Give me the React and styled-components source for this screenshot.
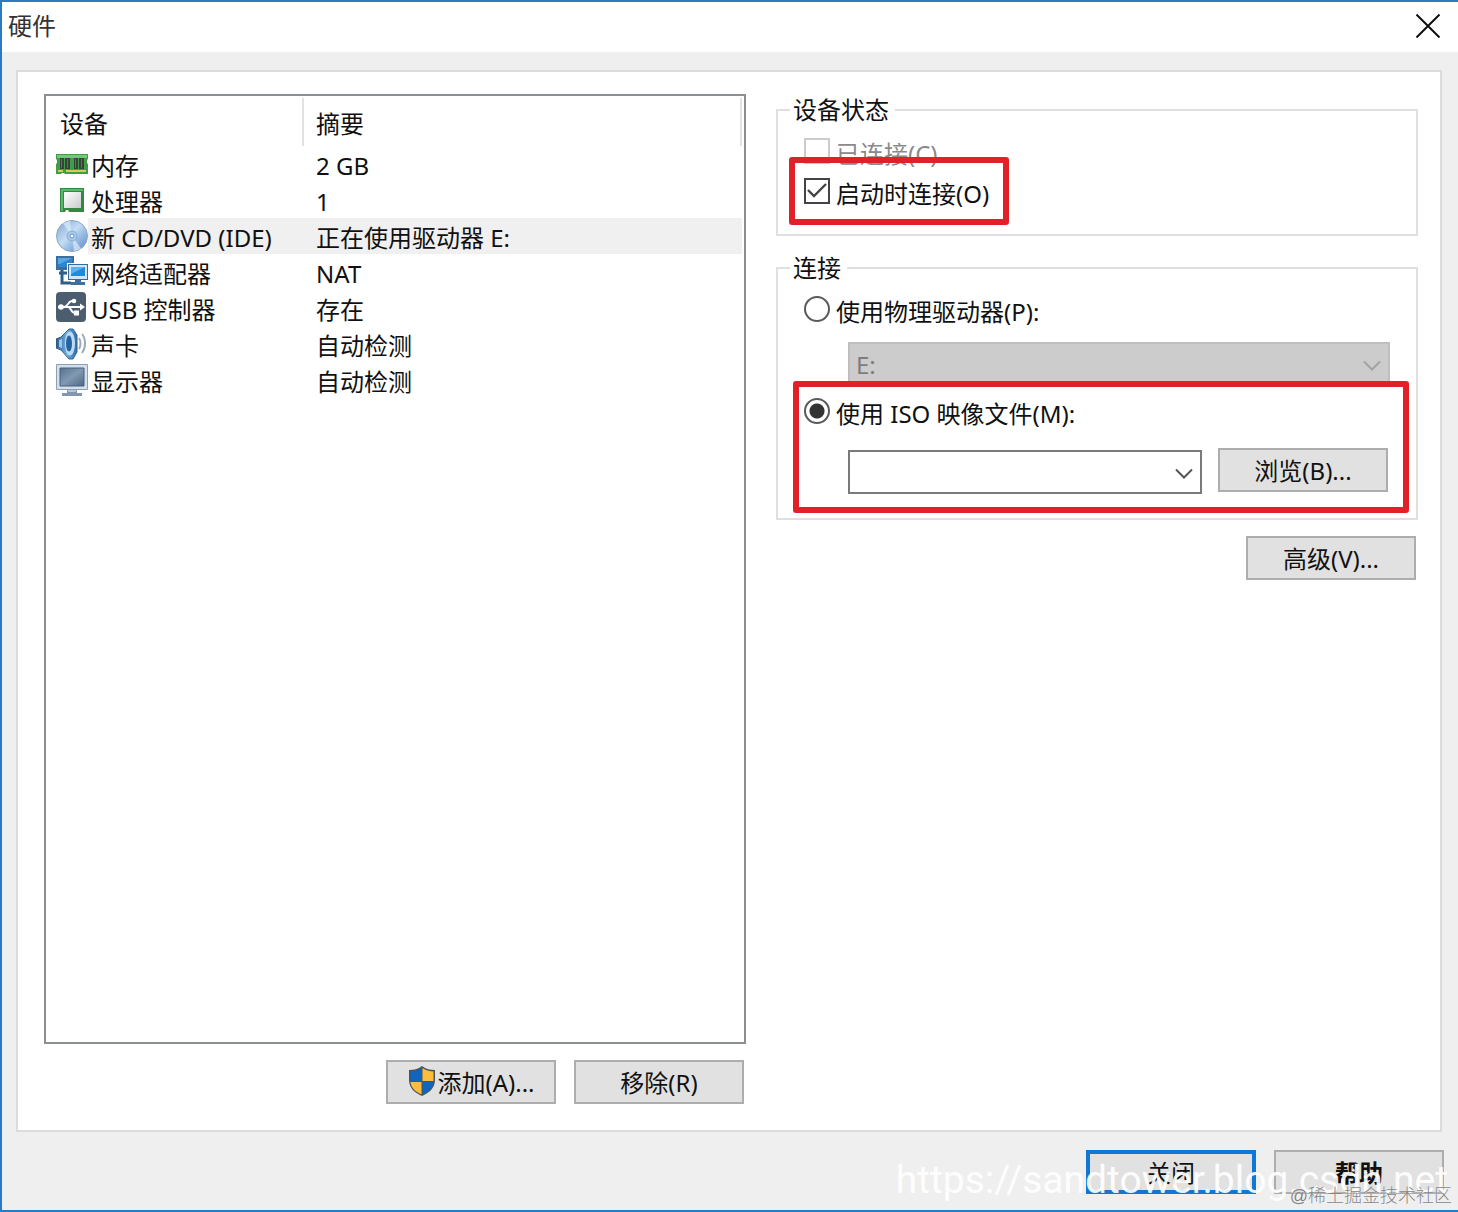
import React, { useState } from "react";
import styled, { createGlobalStyle, css } from "styled-components";

const GlobalStyle = createGlobalStyle`
  * {
    box-sizing: border-box;
  }

  body {
    margin: 0;
    background: #efefef;
    color: #111;
    font-family: "Noto Sans", "Noto Sans CJK SC", sans-serif;
    font-size: 24px;
    line-height: 32px;
  }

  button, select, input {
    font: inherit;
    color: inherit;
    margin: 0;
  }
`;

const Window = styled.div`
  position: relative;
  display: flex;
  flex-direction: column;
  min-height: 100vh;
  border: 2px solid #2b7bc3;
  border-right: 0;
  background: #efefef;
  overflow: hidden;
`;

const TitleBar = styled.header`
  display: flex;
  align-items: center;
  justify-content: space-between;
  height: 50px;
  padding: 0 18px 2px 6px;
  background: #fff;

  h1 {
    margin: 0;
    color: #333;
    font-size: 24px;
    font-weight: 400;
  }
`;

const CloseButton = styled.button`
  display: flex;
  padding: 0;
  border: 0;
  background: none;
`;

const Panel = styled.main`
  flex: 1;
  display: grid;
  grid-template-columns: 702fr 642fr;
  gap: 30px;
  margin: 18px 16px 0 14px;
  padding: 22px 22px 26px 26px;
  border: 2px solid #dcdcdc;
  background: #fff;
`;

const Column = styled.div`
  display: flex;
  flex-direction: column;
  gap: 16px;
  min-width: 0;
`;

const DeviceList = styled.div`
  flex: 1;
  padding-right: 2px;
  border: 2px solid #8c8f91;
`;

const Table = styled.table`
  width: 100%;
  border-collapse: collapse;
  table-layout: fixed;

  th, td {
    padding: 4px 0 0 12px;
    font-weight: 400;
    text-align: left;
    white-space: nowrap;
  }

  th {
    height: 50px;
    padding-top: 6px;
    padding-left: 14px;
    background: linear-gradient(#e2e2e2, #e2e2e2) right bottom / 2px 48px no-repeat;
  }

  th + th {
    padding-left: 12px;
  }

  td {
    height: 36px;
  }
`;

const DeviceCol = styled.col`
  width: 258px;
`;

const DeviceRow = styled.tr`
  td {
    background: ${(p) => (p.$selected ? "#f0f0f0" : "none")};
  }

  td:first-child {
    padding: 0 0 0 10px;
    ${(p) => p.$selected && "background: linear-gradient(to right, #fff 42px, #f0f0f0 42px);"}
  }
`;

const Device = styled.div`
  display: flex;
  align-items: center;
  gap: 3px;
  height: 36px;

  svg {
    flex: none;
  }

  span {
    padding-top: 4px;
  }
`;

const Buttons = styled.div`
  display: flex;
  justify-content: flex-end;
  gap: 18px;
  padding-right: 2px;
`;

const Button = styled.button`
  display: flex;
  align-items: center;
  justify-content: center;
  flex: none;
  width: 170px;
  height: 44px;
  padding: 2px 0 0;
  border: 2px solid #adadad;
  background: #e1e1e1;
  white-space: nowrap;

  svg {
    margin-bottom: 4px;
  }

  ${(p) =>
    p.$primary &&
    css`
      border: 4px solid #0f78d4;
    `}

  ${(p) =>
    p.$strong &&
    css`
      font-weight: 700;
    `}
`;

const Group = styled.fieldset`
  min-width: 0;
  margin: 0;
  padding: 5px 26px ${(p) => p.$bottom}px 26px;
  border: 2px solid #dfdfdf;

  legend {
    margin-left: -14px;
    padding: 0 6px 0 3px;
  }
`;

const Option = styled.label`
  position: relative;
  display: flex;
  align-items: center;
  gap: 6px;
  width: fit-content;
  height: 40px;
  color: ${(p) => (p.$disabled ? "#8a8a8a" : "inherit")};

  span {
    padding-top: 5px;
  }
`;

const Check = styled.input`
  appearance: none;
  flex: none;
  width: 26px;
  height: 26px;
  border: 2px solid #444;
  background: #fff;

  &:disabled {
    border-color: #ccc;
  }

  &:checked {
    background: url("data:image/svg+xml,%3Csvg xmlns='http://www.w3.org/2000/svg' viewBox='0 0 22 22'%3E%3Cpath d='M2 10l6 6L20 4' fill='none' stroke='%23444' stroke-width='2.4'/%3E%3C/svg%3E");
  }
`;

const Radio = styled.input`
  appearance: none;
  flex: none;
  width: 26px;
  height: 26px;
  border: 2px solid #5a5a5a;
  border-radius: 50%;
  background: #fff;

  &:checked {
    background: radial-gradient(circle, #333 7px, #fff 8px);
  }
`;

// red marker drawn on top of the part it points at
const Marked = styled.div`
  position: relative;
  width: ${(p) => (p.$fit ? "fit-content" : "auto")};

  &::after {
    content: "";
    position: absolute;
    inset: ${(p) => p.$inset};
    border: 6px solid #e1202a;
    border-radius: 3px;
    pointer-events: none;
  }
`;

const Field = styled.div`
  display: flex;
  gap: 16px;
  padding: 13px 0 5px 44px;
`;

const SelectBox = styled.div`
  position: relative;
  flex: 1;
  min-width: 0;

  select {
    appearance: none;
    display: block;
    width: 100%;
    height: 44px;
    padding: 2px 40px 0 6px;
    border: 2px solid #7a7a7a;
    border-radius: 0;
    background: #fff;
    opacity: 1;
  }

  select:disabled {
    border-color: #bfbfbf;
    background: #ccc;
    color: #7d7d7d;
  }

  svg {
    position: absolute;
    top: 18px;
    right: 9px;
    color: ${(p) => (p.$disabled ? "#a3a3a3" : "#555")};
    pointer-events: none;
  }
`;

const IsoField = styled(Field)`
  align-items: flex-end;
  padding: 17px 2px 0 44px;

  button {
    margin-bottom: 2px;
  }
`;

const Footer = styled.footer`
  display: flex;
  justify-content: flex-end;
  gap: 18px;
  padding: 18px 14px 16px;
`;

const Watermark = styled.span`
  position: absolute;
  right: 10px;
  bottom: 8px;
  color: rgba(255, 255, 255, 0.92);
  font-family: Roboto, sans-serif;
  font-size: 39px;
  line-height: 44px;
  pointer-events: none;
`;

const Credit = styled.span`
  position: absolute;
  right: 6px;
  bottom: 2px;
  color: #858585;
  font-family: "Liberation Sans", "Noto Sans CJK SC", sans-serif;
  font-size: 18px;
  font-weight: 300;
  line-height: 24px;
  text-shadow: 0 0 1px #fff;
  pointer-events: none;
`;

const CloseIcon = () => (
  <svg width="24" height="24" viewBox="0 0 24 24" fill="none" stroke="#111" strokeWidth="2">
    <path d="M0.5 0.5l23 23M23.5 0.5l-23 23" />
  </svg>
);

const Chevron = () => (
  <svg width="18" height="11" viewBox="0 0 18 11" fill="none" stroke="currentColor" strokeWidth="2">
    <path d="M1 1.5l8 8 8-8" />
  </svg>
);

const MemoryIcon = () => (
  <svg width="32" height="32" viewBox="0 0 32 32">
    <path d="M0 6h32v5l-1 1v3l1 1v10H9l-1-1H6l-1 1H0V16l1-1v-3l-1-1z" fill="#3f9d48" />
    <path d="M1 7h30v3H1z" fill="#72c878" />
    <path d="M4 10h4v11H4zM9 10h5v11H9zM18 10h4v11h-4zM23 10h5v11h-5z" fill="#35433a" />
    <path d="M5 11h1v9H5zM11 11h1v9h-1zM19 11h1v9h-1zM25 11h1v9h-1z" fill="#5d6f61" />
    <path d="M2 22h5v2H2zM10 22h20v2H10z" fill="#dcc65e" />
  </svg>
);

const CpuIcon = () => (
  <svg width="32" height="32" viewBox="0 0 32 32">
    <defs>
      <linearGradient id="cpu" x1="0" y1="0" x2="1" y2="1">
        <stop offset="0" stopColor="#fff" />
        <stop offset="1" stopColor="#c9cccb" />
      </linearGradient>
    </defs>
    <path d="M4 4h24v24H13l-1-2h-2l-1 2H4z" fill="#2f8a42" />
    <path d="M5 5h22v2H7v20H5z" fill="#5cb568" />
    <path d="M8 8h17v16H8z" fill="url(#cpu)" />
  </svg>
);

const DiscIcon = () => (
  <svg width="32" height="32" viewBox="0 0 32 32">
    <defs>
      <linearGradient id="disc" x1="0" y1="0" x2="1" y2="1">
        <stop offset="0" stopColor="#7ea3cd" />
        <stop offset="0.45" stopColor="#c5ddf4" />
        <stop offset="0.6" stopColor="#9fc3e8" />
        <stop offset="1" stopColor="#5b88bd" />
      </linearGradient>
    </defs>
    <circle cx="16" cy="16" r="15.5" fill="url(#disc)" stroke="#86a6ca" />
    <path d="M16 16L7 3.5A15 15 0 0 1 14 1z" fill="#dcebfa" opacity="0.7" />
    <path d="M16 16l9 12.5A15 15 0 0 1 18 31z" fill="#dcebfa" opacity="0.7" />
    <circle cx="16" cy="16" r="5" fill="#a9c9ea" stroke="#86abd6" />
    <circle cx="16" cy="16" r="2" fill="#eef5fc" stroke="#6d97c6" />
  </svg>
);

const NetworkIcon = () => (
  <svg width="32" height="32" viewBox="0 0 32 32">
    <path d="M0 0h18v14H0z" fill="#3b6e9f" />
    <path d="M2 2h14v9H2z" fill="#2d86d2" />
    <path d="M2 2h14L4 8H2z" fill="#5aa6e2" />
    <path d="M3 17h8M6 14v13h9" fill="none" stroke="#2f6089" strokeWidth="3" />
    <path d="M11 7h21v18H11z" fill="#fff" />
    <path d="M12 8h20v16H12z" fill="#3a6b98" />
    <path d="M13 9h18v14H13z" fill="#d4e6f5" />
    <path d="M15 11h14v9H15z" fill="#1e8ae0" />
    <path d="M15 11h14l-14 7z" fill="#5bb2f2" />
    <path d="M19 24h6v2h4v3H15v-3h4z" fill="#3e6f9d" />
  </svg>
);

const UsbIcon = () => (
  <svg width="32" height="32" viewBox="0 0 32 32">
    <rect x="0" y="0" width="30" height="30" rx="4" fill="#4d5d70" />
    <path d="M2 15h24M8 15c4 0 4-6 8-6h2M12 15c3 0 3 6 7 6h2" fill="none" stroke="#fff" strokeWidth="2" />
    <circle cx="5" cy="15" r="2.8" fill="#fff" />
    <circle cx="18" cy="9" r="2.3" fill="#fff" />
    <path d="M18 18.5h5v5h-5zM24 11.5l5 3.5-5 3.5z" fill="#fff" />
  </svg>
);

const SoundIcon = () => (
  <svg width="32" height="32" viewBox="0 0 32 32">
    <defs>
      <linearGradient id="sound" x1="0" y1="0" x2="1" y2="0">
        <stop offset="0" stopColor="#2d557e" />
        <stop offset="0.5" stopColor="#6fb0e6" />
        <stop offset="1" stopColor="#2e6ca8" />
      </linearGradient>
    </defs>
    <path d="M0 11l5-2 8-8h4l4 6v17l-4 7h-4l-8-9-5-2z" fill="url(#sound)" stroke="#35618d" />
    <ellipse cx="14" cy="15.5" rx="5" ry="12" fill="#bcdcf5" />
    <ellipse cx="13" cy="15.5" rx="3" ry="8" fill="#27629e" />
    <path d="M3 12l3-1v9l-3-1z" fill="#9cc8ec" />
    <path d="M23 10c2 3 2 8 0 11M26 6c4 5 4 14 0 19" fill="none" stroke="#9aabbc" strokeWidth="2" />
  </svg>
);

const DisplayIcon = () => (
  <svg width="32" height="32" viewBox="0 0 32 32">
    <defs>
      <linearGradient id="display" x1="0" y1="0" x2="1" y2="1">
        <stop offset="0" stopColor="#54718f" />
        <stop offset="0.5" stopColor="#8299b2" />
        <stop offset="1" stopColor="#4d6986" />
      </linearGradient>
    </defs>
    <path d="M0.5 0.5h31v25H.5z" fill="#d3dfea" stroke="#8ba1b8" />
    <path d="M4 4h24v18H4z" fill="url(#display)" stroke="#48627d" />
    <path d="M11 26h10v3h5v3H6v-3h5z" fill="#7f96ad" />
    <path d="M12 26h8v2h-8z" fill="#b4c6d7" />
  </svg>
);

const ShieldIcon = () => (
  <svg width="30" height="32" viewBox="0 0 30 32">
    <path d="M15 1c4 3 8 4 13 4v10c0 8-6 13-13 16C8 28 2 23 2 15V5c5 0 9-1 13-4z" fill="#4b545c" />
    <path d="M14.5 3v13H3.5V6.500c4 0 8-1.500 11-3.500z" fill="#0f66bd" />
    <path d="M15.5 3v13h11V6.500c-4 0-8-1.500-11-3.500z" fill="#fbbd3c" />
    <path d="M3.5 17h11v12.500C8 26.500 4 22.500 3.500 17z" fill="#fbbd3c" />
    <path d="M26.5 17h-11v12.500C22 26.500 26 22.500 26.500 17z" fill="#0f66bd" />
  </svg>
);

const devices = [
  { name: "内存", summary: "2 GB", Icon: MemoryIcon },
  { name: "处理器", summary: "1", Icon: CpuIcon },
  { name: "新 CD/DVD (IDE)", summary: "正在使用驱动器 E:", Icon: DiscIcon },
  { name: "网络适配器", summary: "NAT", Icon: NetworkIcon },
  { name: "USB 控制器", summary: "存在", Icon: UsbIcon },
  { name: "声卡", summary: "自动检测", Icon: SoundIcon },
  { name: "显示器", summary: "自动检测", Icon: DisplayIcon },
];

function App() {
  const [selected, setSelected] = useState(2);
  const [connectOnStart, setConnectOnStart] = useState(true);
  const [source, setSource] = useState("iso");

  return (
    <>
      <GlobalStyle />
      <Window>
        <TitleBar>
          <h1>硬件</h1>
          <CloseButton aria-label="关闭">
            <CloseIcon />
          </CloseButton>
        </TitleBar>

        <Panel>
          <Column>
            <DeviceList>
              <Table>
                <colgroup>
                  <DeviceCol />
                  <col />
                </colgroup>
                <thead>
                  <tr>
                    <th>设备</th>
                    <th>摘要</th>
                  </tr>
                </thead>
                <tbody>
                  {devices.map(({ name, summary, Icon }, i) => (
                    <DeviceRow key={name} $selected={i === selected} onClick={() => setSelected(i)}>
                      <td>
                        <Device>
                          <Icon />
                          <span>{name}</span>
                        </Device>
                      </td>
                      <td>{summary}</td>
                    </DeviceRow>
                  ))}
                </tbody>
              </Table>
            </DeviceList>
            <Buttons>
              <Button>
                <ShieldIcon />
                添加(A)...
              </Button>
              <Button>移除(R)</Button>
            </Buttons>
          </Column>

          <Column>
            <Group $bottom={23}>
              <legend>设备状态</legend>
              <Option $disabled>
                <Check type="checkbox" disabled />
                <span>已连接(C)</span>
              </Option>
              <Marked $fit $inset="-14px -20px -14px -15px">
                <Option>
                  <Check
                    type="checkbox"
                    checked={connectOnStart}
                    onChange={(e) => setConnectOnStart(e.target.checked)}
                  />
                  <span>启动时连接(O)</span>
                </Option>
              </Marked>
            </Group>

            <Group $bottom={24}>
              <legend>连接</legend>
              <Option>
                <Radio
                  type="radio"
                  name="source"
                  checked={source === "physical"}
                  onChange={() => setSource("physical")}
                />
                <span>使用物理驱动器(P):</span>
              </Option>
              <Field>
                <SelectBox $disabled={source === "iso"}>
                  <select aria-label="物理驱动器" disabled={source === "iso"}>
                    <option>E:</option>
                  </select>
                  <Chevron />
                </SelectBox>
              </Field>
              <Marked $inset="-10px -19px -19px -11px">
                <Option>
                  <Radio
                    type="radio"
                    name="source"
                    checked={source === "iso"}
                    onChange={() => setSource("iso")}
                  />
                  <span>使用 ISO 映像文件(M):</span>
                </Option>
                <IsoField>
                  <SelectBox>
                    <select aria-label="ISO 映像文件" />
                    <Chevron />
                  </SelectBox>
                  <Button>浏览(B)...</Button>
                </IsoField>
              </Marked>
            </Group>

            <Buttons>
              <Button>高级(V)...</Button>
            </Buttons>
          </Column>
        </Panel>

        <Footer>
          <Button $primary>关闭</Button>
          <Button $strong>帮助</Button>
        </Footer>
        <Watermark>https://sandtower.blog.csdn.net</Watermark>
        <Credit>@稀土掘金技术社区</Credit>
      </Window>
    </>
  );
}

export default App;
